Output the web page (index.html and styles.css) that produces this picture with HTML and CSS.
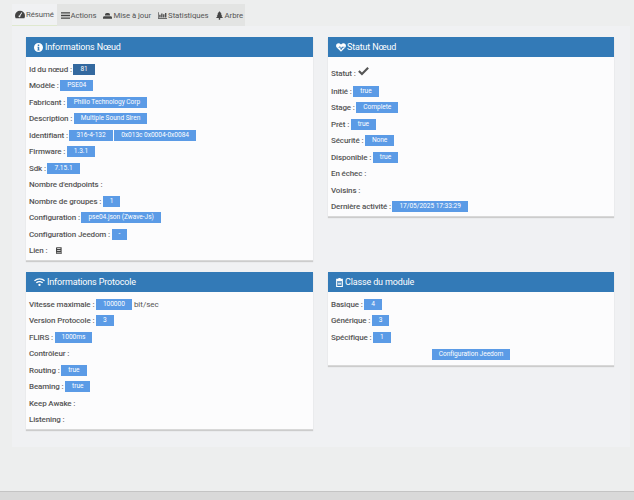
FILE: index.html
```html
<!DOCTYPE html>
<html lang="fr">
<head>
<meta charset="utf-8">
<title>Résumé</title>
<link rel="stylesheet" href="styles.css">
</head>
<body>
<main class="page">
  <nav class="tabs">
    <a class="tab active"><svg class="ti wide-icon" viewBox="0 0 16 12"><path d="M8 0a8 8 0 0 0-8 8c0 1.500.4 2.800 1 4h14c.6-1.200 1-2.500 1-4a8 8 0 0 0-8-8zM7 7.500l3.500-5 1 .6-3 5.300a1.500 1.500 0 1 1-1.500-.9z" fill-rule="evenodd"/></svg>Résumé</a>
    <a class="tab"><svg class="ti" viewBox="0 0 14 12"><path d="M0 1h14v2H0zM0 5h14v2H0zM0 9h14v2H0z"/></svg>Actions</a>
    <a class="tab"><svg class="ti" viewBox="0 0 14 12"><path d="M5 2h4v1h1.500l.5 3H3l.5-3H5zM1 7h12l1 2v2H0V9z"/></svg>Mise à jour</a>
    <a class="tab"><svg class="ti" viewBox="0 0 14 12"><path d="M0 1h1v9h13v1H0zM2 5h2v4H2zM5 3h2v6H5zM8 4h2v5H8zM11 2h2v7h-2z"/></svg>Statistiques</a>
    <a class="tab"><svg class="ti narrow" viewBox="0 0 10 12"><path d="M5 0l3 3.500H6.800L9 6.500H7.500L10 9.500H6V12H4V9.500H0l2.500-3H1l2.200-3H2z"/></svg>Arbre</a>
  </nav>
  <div class="content">
    <section class="panel">
      <h3 class="head"><svg class="hi" viewBox="0 0 12 12"><path fill-rule="evenodd" d="M6 0a6 6 0 1 1 0 12A6 6 0 0 1 6 0zM5 2v2h2V2zM4.500 5v1H5v3H4.500v1h3V9H7V5z"/></svg>Informations Nœud</h3>
      <div class="body">
        <div class="row"><b>Id du nœud :</b><span class="badge dark">81</span></div>
        <div class="row"><b>Modèle :</b><span class="badge">PSE04</span></div>
        <div class="row"><b>Fabricant :</b><span class="badge">Philio Technology Corp</span></div>
        <div class="row"><b>Description :</b><span class="badge">Multiple Sound Siren</span></div>
        <div class="row"><b>Identifiant :</b><span class="badge">316-4-132</span><span class="badge">0x013c 0x0004-0x0084</span></div>
        <div class="row"><b>Firmware :</b><span class="badge">1.3.1</span></div>
        <div class="row"><b>Sdk :</b><span class="badge">7.15.1</span></div>
        <div class="row"><b>Nombre d'endpoints :</b></div>
        <div class="row"><b>Nombre de groupes :</b><span class="badge">1</span></div>
        <div class="row"><b>Configuration :</b><span class="badge">pse04.json (Zwave-Js)</span></div>
        <div class="row"><b>Configuration Jeedom :</b><span class="badge">-</span></div>
        <div class="row"><b>Lien :</b><svg class="book" viewBox="0 0 8 9"><path fill-rule="evenodd" d="M1 0h6.500v9H1a1 1 0 0 1-1-1V1a1 1 0 0 1 1-1zM1.500 1.500v1h4.500v-1zM1.500 4v1h4.500V4zM1 7v1h5.500V7z"/></svg></div>
      </div>
    </section>
    <section class="panel">
      <h3 class="head"><svg class="hi heart" viewBox="0 0 14 12"><path fill-rule="evenodd" d="M7 12L1 6C-1 3.500.5 0 3.500 0 5 0 6.200.8 7 2c.8-1.200 2-2 3.500-2 3 0 4.500 3.500 2.500 6zM1.500 5.500h3l1-2 1.500 4 1.300-2.500h3.700v1H9.800L7 10 5.500 6l-.5.500z"/></svg>Statut Nœud</h3>
      <div class="body">
        <div class="row first"><b>Statut :</b><svg class="check" viewBox="0 0 12 10"><path d="M4.300 9.500L0 5.200 1.700 3.500l2.600 2.600L10.300 0 12 1.700z"/></svg></div>
        <div class="row"><b>Initié :</b><span class="badge">true</span></div>
        <div class="row"><b>Stage :</b><span class="badge">Complete</span></div>
        <div class="row"><b>Prêt :</b><span class="badge">true</span></div>
        <div class="row"><b>Sécurité :</b><span class="badge">None</span></div>
        <div class="row"><b>Disponible :</b><span class="badge">true</span></div>
        <div class="row"><b>En échec :</b></div>
        <div class="row"><b>Voisins :</b></div>
        <div class="row"><b>Dernière activité :</b><span class="badge">17/05/2025 17:33:29</span></div>
      </div>
    </section>
    <section class="panel">
      <h3 class="head"><svg class="hi wifi" viewBox="0 0 14 11"><path d="M7 0c2.700 0 5.200 1 7 2.800L12.800 4A8.200 8.200 0 0 0 7 1.700 8.200 8.200 0 0 0 1.200 4L0 2.800A10 10 0 0 1 7 0zM7 3.500c1.800 0 3.400.7 4.600 1.800L10.400 6.500A5 5 0 0 0 7 5.200a5 5 0 0 0-3.400 1.300L2.400 5.300A6.700 6.700 0 0 1 7 3.500zM5.500 8.500a1.500 1.500 0 1 1 3 0 1.500 1.500 0 0 1-3 0z"/></svg>Informations Protocole</h3>
      <div class="body">
        <div class="row"><b>Vitesse maximale :</b><span class="badge">100000</span><span class="unit">bit/sec</span></div>
        <div class="row"><b>Version Protocole :</b><span class="badge">3</span></div>
        <div class="row"><b>FLIRS :</b><span class="badge">1000ms</span></div>
        <div class="row"><b>Contrôleur :</b></div>
        <div class="row"><b>Routing :</b><span class="badge">true</span></div>
        <div class="row"><b>Beaming :</b><span class="badge">true</span></div>
        <div class="row"><b>Keep Awake :</b></div>
        <div class="row"><b>Listening :</b></div>
      </div>
    </section>
    <section class="panel">
      <h3 class="head"><svg class="hi clip" viewBox="0 0 9 12"><path fill-rule="evenodd" d="M3 0h3v1h3v11H0V1h3zM1.500 4v6.500h6V4z M2.300 5h4.400v.8H2.300zM2.300 6.800h4.400v.8H2.300zM2.300 8.600h4.400v.8H2.300z"/></svg>Classe du module</h3>
      <div class="body">
        <div class="row"><b>Basique :</b><span class="badge">4</span></div>
        <div class="row"><b>Générique :</b><span class="badge">3</span></div>
        <div class="row"><b>Spécifique :</b><span class="badge">1</span></div>
        <div class="center"><span class="badge wide">Configuration Jeedom</span></div>
      </div>
    </section>
  </div>
</main>
<footer class="foot"></footer>
</body>
</html>
```
FILE: styles.css
```css
* { box-sizing: border-box; }
html, body { height: 100%; }
body {
  margin: 0;
  background: #edeeee;
  color: #555;
  font-family: Roboto, "Liberation Sans", sans-serif;
  font-size: 8px;
  overflow: hidden;
  display: flex;
  flex-direction: column;
}
.page {
  flex: 1;
  padding: 4px 4px 0 12px;
}
.tabs {
  display: flex;
  width: 233px;
  height: 22px;
  background: #e3e4e3;
}
.tab {
  display: flex;
  align-items: center;
  padding: 0 3.5px;
  color: #555;
  font-size: 7.8px;
  letter-spacing: -0.06px;
  white-space: nowrap;
}
.tab.active {
  width: 45px;
  padding: 0 0 0 3px;
  background: #f0f1f3;
  border-bottom: 1px solid #dfe8cf;
  flex: none;
}
.ti {
  width: 9px;
  height: 9px;
  margin-right: 1px;
  fill: #444;
  flex: none;
}
.ti.wide-icon { width: 10px; }
.ti.narrow { width: 7px; margin-right: 2px; }
.content {
  display: grid;
  grid-template-columns: 287px 286px;
  grid-template-rows: 224px 158px;
  column-gap: 15px;
  row-gap: 11px;
  align-items: start;
  height: 421px;
  padding: 11px 0 0 14px;
  background: #f0f1f3;
}
.panel {
  background: #fcfcfd;
  box-shadow: 0 1px 1px #ccc;
  border-bottom: 1px solid #d8d8d8;
}
.head {
  display: flex;
  align-items: center;
  height: 20px;
  margin: 0;
  padding-left: 8px;
  background: #337ab7;
  color: #fff;
  font-size: 9px;
  font-weight: 400;
  letter-spacing: -0.15px;
}
.hi {
  width: 9px;
  height: 9px;
  margin-right: 2px;
  fill: #fff;
  flex: none;
}
.hi.heart { width: 10px; margin-right: 1px; }
.hi.wifi { width: 11px; }
.hi.clip { width: 7px; margin-right: 2px; }
.body {
  padding: 4px 3px 1px;
}
.row {
  display: flex;
  align-items: center;
  height: 16.5px;
  white-space: nowrap;
}
.row b { font-weight: 500; letter-spacing: -0.13px; }
.row.first { height: 22px; padding-top: 3px; }
.badge {
  display: inline-block;
  height: 11px;
  margin-left: 1.5px;
  padding: 0 7px;
  background: #5b9be6;
  color: #fff;
  font-size: 6.6px;
  letter-spacing: -0.04px;
  line-height: 11px;
}
.badge.dark { background: #34699f; }
.unit { margin-left: 2px; font-weight: 400; }
.book { width: 6px; height: 7px; margin-left: 9px; fill: #444; }
.check { width: 11px; height: 9px; margin-left: 2px; margin-top: -5px; fill: #555; }
.center { display: flex; justify-content: center; padding-top: 3px; height: 18px; }
.badge.wide { margin: 0; }
.foot {
  flex: none;
  height: 9px;
  background: #d9d9d9;
  border-top: 1px solid #c4c4c4;
}
```
